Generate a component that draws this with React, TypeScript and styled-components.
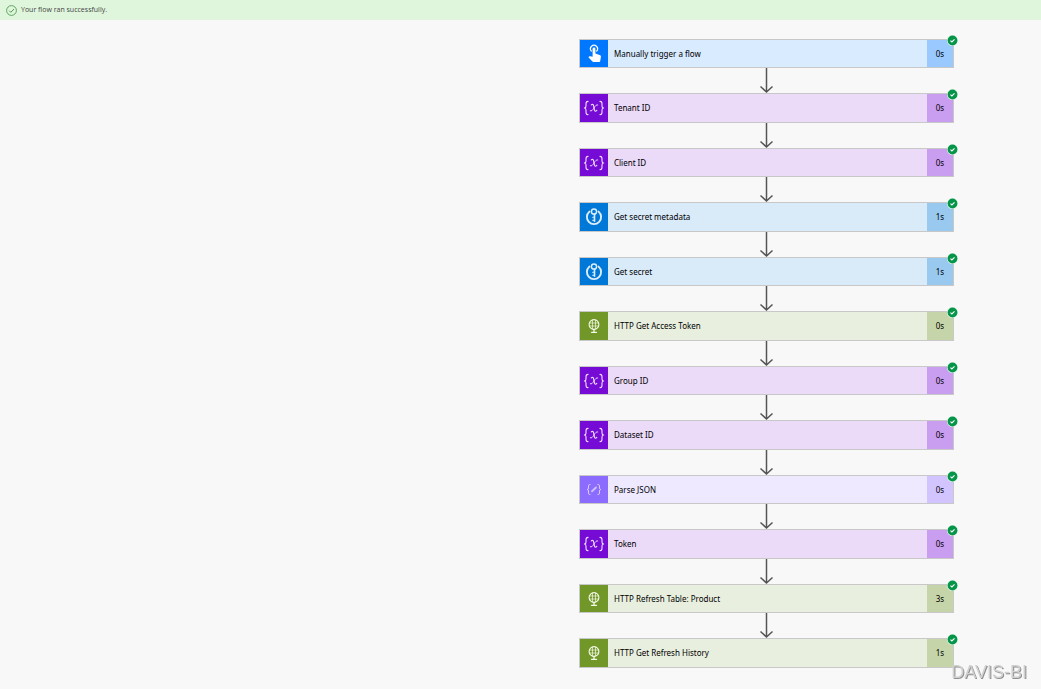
import React from "react";
import styled, { createGlobalStyle } from "styled-components";

const GlobalStyle = createGlobalStyle`
  * { box-sizing: border-box; }
  body {
    margin: 0;
    background: #f8f8f8;
    color: #000;
    font-family: "Noto Sans", "Open Sans", sans-serif;
    font-size: 8px;
    line-height: 12px;
  }
`;

type Kind = "trigger" | "variable" | "vault" | "http" | "json";

const palette: Record<Kind, { icon: string; body: string; time: string }> = {
  trigger: { icon: "#0077ff", body: "#d9ebff", time: "#99c9ff" },
  variable: { icon: "#770bd6", body: "#ebdaf8", time: "#c99def" },
  vault: { icon: "#0078d7", body: "#d9eaf9", time: "#99c9ef" },
  http: { icon: "#709727", body: "#e9efdf", time: "#c6d5a9" },
  json: { icon: "#8c6cff", body: "#eee9ff", time: "#d1c4ff" },
};

const steps: { title: string; kind: Kind; time: string }[] = [
  { title: "Manually trigger a flow", kind: "trigger", time: "0s" },
  { title: "Tenant ID", kind: "variable", time: "0s" },
  { title: "Client ID", kind: "variable", time: "0s" },
  { title: "Get secret metadata", kind: "vault", time: "1s" },
  { title: "Get secret", kind: "vault", time: "1s" },
  { title: "HTTP Get Access Token", kind: "http", time: "0s" },
  { title: "Group ID", kind: "variable", time: "0s" },
  { title: "Dataset ID", kind: "variable", time: "0s" },
  { title: "Parse JSON", kind: "json", time: "0s" },
  { title: "Token", kind: "variable", time: "0s" },
  { title: "HTTP Refresh Table: Product", kind: "http", time: "3s" },
  { title: "HTTP Get Refresh History", kind: "http", time: "1s" },
];

const Banner = styled.div`
  display: flex;
  align-items: center;
  gap: 4px;
  height: 20px;
  padding: 0 6px;
  background: #dff6dd;
  color: #444;
  font-family: "Open Sans", "Noto Sans", sans-serif;
  font-size: 7px;
`;

const Canvas = styled.main`
  display: flex;
  justify-content: flex-end;
  padding: 19px 87px 21px 16px;
`;

const Flow = styled.ol`
  width: 375px;
  max-width: 100%;
  margin: 0;
  padding: 0;
  list-style: none;
`;

const Step = styled.li`
  display: flex;
  flex-direction: column;
`;

const Badge = styled.svg`
  position: absolute;
  top: -5px;
  right: -5px;
`;

const Card = styled.button<{ $kind: Kind }>`
  position: relative;
  display: flex;
  align-items: stretch;
  height: 29px;
  padding: 0;
  border: 1px solid #c8c8c8;
  background: ${(p) => palette[p.$kind].body};
  color: inherit;
  font: inherit;
  text-align: left;
  cursor: pointer;

  ${Step}:nth-child(even) & {
    height: 30px;
  }
`;

const IconTile = styled.span<{ $kind: Kind }>`
  display: grid;
  place-items: center;
  width: 28px;
  background: ${(p) => palette[p.$kind].icon};
`;

const Title = styled.span`
  flex: 1;
  align-self: center;
  padding-left: 6px;
`;

const Time = styled.span<{ $kind: Kind }>`
  display: grid;
  place-items: center;
  width: 26px;
  background: ${(p) => palette[p.$kind].time};
`;

const Connector = styled.svg`
  display: block;
  align-self: center;
`;

const Watermark = styled.div`
  position: fixed;
  right: 14px;
  bottom: 7px;
  color: #d0d0d0;
  font-family: "Liberation Sans", sans-serif;
  font-size: 18px;
  line-height: 20px;
  text-shadow: 1px 1px 0 #909090;
`;

function StepIcon({ kind }: { kind: Kind }) {
  const line = { fill: "none", stroke: "#fff", strokeLinecap: "round" as const, strokeLinejoin: "round" as const };
  switch (kind) {
    case "trigger":
      return (
        <svg width="28" height="27" viewBox="0 0 28 27" aria-hidden="true">
          <path {...line} strokeWidth="1.2" d="M11.3 11a3.500 3.500 0 1 1 5.400 0" />
          <path fill="#fff" d="M12.6 8.800a1.400 1.400 0 0 1 2.800 0v4.700l4.200 1.400c1 .3 1.500 1 1.300 2l-.7 4c-.1.700-.6 1.100-1.300 1.100h-5.300c-.5 0-.9-.2-1.200-.5l-4-4.300.7-.7c.3-.3.7-.4 1.100-.3l2.400.6z" />
        </svg>
      );
    case "variable":
      return (
        <svg width="28" height="28" viewBox="0 0 28 28" aria-hidden="true">
          <g {...line} stroke="#f0e4fb" strokeWidth="1.100">
            <path d="M8 7.400c-1.800 0-2 1-2 2.400v2.200c0 1.200-.4 2-1.600 2 1.200 0 1.600.8 1.600 2v2.200c0 1.400.2 2.400 2 2.400" />
            <path d="M20 7.400c1.800 0 2 1 2 2.400v2.200c0 1.200.4 2 1.600 2-1.200 0-1.600.8-1.600 2v2.200c0 1.400-.2 2.400-2 2.400" />
            <path d="M11.300 10.900c1.300-1 2-.4 2.300.9l.9 4.300c.3 1.300 1.200 1.500 2.300.3" />
            <path strokeWidth=".9" d="M17.700 10.900c-1.200-.5-2.300.8-3.700 3.100-1.400 2.300-2.400 3.400-3.700 2.800" />
          </g>
        </svg>
      );
    case "vault":
      return (
        <svg width="28" height="28" viewBox="0 0 28 28" aria-hidden="true">
          <path {...line} stroke="#dceefb" strokeWidth="1.900" d="M9.400 8.600a7.100 7.100 0 1 0 9.200 0" />
          <circle {...line} stroke="#dceefb" strokeWidth="1.500" cx="14" cy="8.500" r="2.600" />
          <path {...line} stroke="#dceefb" strokeWidth="1.600" d="M14.500 11.200v7" />
          <path {...line} stroke="#dceefb" strokeWidth="1.100" d="M14 14.300h-1.300M14 17.300h-1.300" />
        </svg>
      );
    case "http":
      return (
        <svg width="28" height="28" viewBox="0 0 28 28" aria-hidden="true">
          <g {...line} stroke="#f4f8ea">
            <circle cx="14" cy="12.500" r="4.900" strokeWidth="1.100" />
            <path strokeWidth=".7" d="M12.500 8v9M15.500 8v9M9.500 11h9M9.500 14h9" />
            <path strokeWidth="1.300" d="M14 17.500v2.500M11.500 20.300h5" />
          </g>
        </svg>
      );
    case "json":
      return (
        <svg width="28" height="27" viewBox="0 0 28 27" aria-hidden="true">
          <g {...line} stroke="#e4dcff">
            <path d="M10 8.500c-1.300 0-1.500.7-1.500 1.700v1.600c0 .9-.3 1.500-1.200 1.700.9.200 1.200.8 1.200 1.700v1.600c0 1 .2 1.700 1.500 1.700" />
            <path d="M18 8.500c1.300 0 1.500.7 1.500 1.700v1.600c0 .9.300 1.500 1.200 1.700-.9.200-1.200.8-1.200 1.700v1.600c0 1-.2 1.700-1.500 1.700" />
            <path stroke="#cdbfff" strokeWidth="1.900" d="M12 15.300l4-3.800" />
          </g>
        </svg>
      );
  }
}

export default function App() {
  return (
    <>
      <GlobalStyle />
      <Banner role="status">
        <svg width="11" height="11" viewBox="0 0 11 11" fill="none" stroke="#3f9142" aria-hidden="true">
          <circle cx="5.500" cy="5.500" r="4.900" strokeWidth=".8" />
          <path d="M3.200 5.700l1.600 1.600 3.200-3.300" strokeWidth=".9" />
        </svg>
        <span>Your flow ran successfully.</span>
      </Banner>
      <Canvas>
        <Flow>
          {steps.map((step, i) => (
            <Step key={step.title}>
              <Card type="button" $kind={step.kind}>
                <IconTile $kind={step.kind}>
                  <StepIcon kind={step.kind} />
                </IconTile>
                <Title>{step.title}</Title>
                <Time $kind={step.kind}>{step.time}</Time>
                <Badge width="11" height="11" viewBox="0 0 11 11" role="img" aria-label="Succeeded">
                  <circle cx="5.500" cy="5.500" r="5.500" fill="#e6f5ec" />
                  <circle cx="5.500" cy="5.500" r="4.900" fill="#059549" />
                  <path d="M3.500 5.600l1.400 1.300 2.600-2.500" fill="none" stroke="#fff" strokeWidth="1.100" />
                </Badge>
              </Card>
              {i < steps.length - 1 && (
                <Connector width="15" height="25" viewBox="0 0 15 25" fill="none" stroke="#555" aria-hidden="true">
                  <path d="M7.500 0v24M1.500 18.500l6 5.500 6-5.500" strokeWidth="1.500" />
                </Connector>
              )}
            </Step>
          ))}
        </Flow>
      </Canvas>
      <Watermark>DAVIS-BI</Watermark>
    </>
  );
}
